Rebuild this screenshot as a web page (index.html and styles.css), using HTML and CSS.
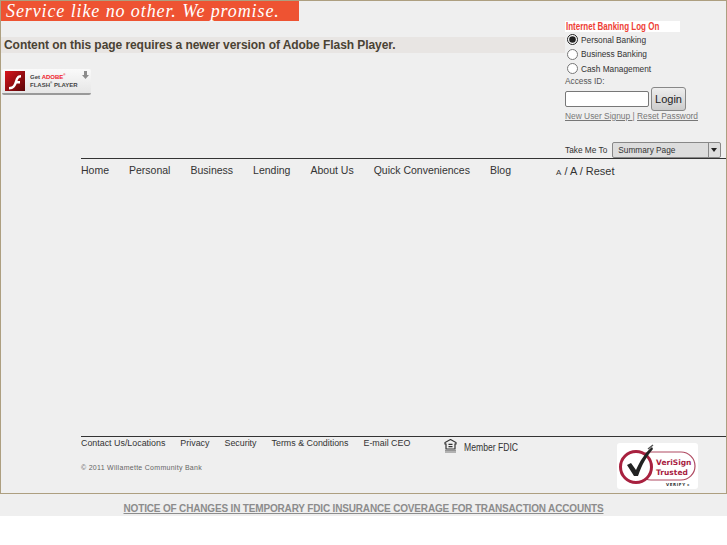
FILE: index.html
```html
<!DOCTYPE html>
<html lang="en">
<head>
<meta charset="utf-8">
<title>Willamette Community Bank</title>
<link rel="stylesheet" href="styles.css">
</head>
<body>
<div class="shell">
  <header class="top">
    <div class="top-left">
      <div class="banner">Service like no other. We promise.</div>
      <div class="flash-note">Content on this page requires a newer version of Adobe Flash Player.</div>
      <a class="flash-badge" href="#">
        <span class="flash-icon"><svg width="20" height="20" viewBox="0 0 20 20"><defs><linearGradient id="fg" x1="0" y1="0" x2="1" y2="1"><stop offset="0" stop-color="#d8141c"/><stop offset="1" stop-color="#5a0508"/></linearGradient></defs><rect width="20" height="20" fill="url(#fg)"/><path d="M4 16c4 0 5-3 6-6s2-6 6-6v2.500c-2.500 0-3 2-3.500 3.500H15v2.500h-3.300C10.700 15 9 18.500 4 18.500z" fill="#fff"/></svg></span>
        <span class="flash-text"><span>Get <b class="adobe">ADOBE<sup>®</sup></b></span><span>FLASH<sup>®</sup> PLAYER</span></span>
        <svg class="flash-dl" width="7" height="9" viewBox="0 0 7 9"><path d="M2 0h3v4h2L3.500 8 0 4h2z" fill="#8c8c8c"/></svg>
      </a>
    </div>
    <form class="login">
      <div class="login-title"><span class="squeeze">Internet Banking Log On</span></div>
      <label class="radio-row"><input type="radio" name="bank" checked> Personal Banking</label>
      <label class="radio-row"><input type="radio" name="bank"> Business Banking</label>
      <label class="radio-row"><input type="radio" name="bank"> Cash Management</label>
      <div class="access-label">Access ID:</div>
      <div class="access-row"><input class="access-input" type="text"><button class="login-btn" type="button">Login</button></div>
      <div class="login-links"><a href="#">New User Signup </a> | <a href="#">Reset Password</a></div>
      <div class="take-row"><span>Take Me To</span><div class="select"><span class="select-value">Summary Page</span><span class="select-arrow"></span></div></div>
    </form>
  </header>

  <nav class="nav">
    <div class="nav-links">
      <a href="#">Home</a><a href="#">Personal</a><a href="#">Business</a><a href="#">Lending</a><a href="#">About Us</a><a href="#">Quick Conveniences</a><a href="#">Blog</a>
    </div>
    <div class="text-size"><span class="small-a">A</span> / <span class="big-a">A</span> / Reset</div>
  </nav>

  <footer class="foot">
    <div class="foot-left">
      <div class="foot-links"><a href="#">Contact Us/Locations</a><a href="#">Privacy</a><a href="#">Security</a><a href="#">Terms &amp; Conditions</a><a href="#">E-mail CEO</a></div>
      <div class="copyright">© 2011 Willamette Community Bank</div>
    </div>
    <div class="fdic">
      <svg width="13" height="14" viewBox="0 0 13 14"><path d="M6.500 .5 1 3.500V5h1v5h9V5h1V3.500z" fill="none" stroke="#333" stroke-width="1.200"/><path d="M4.500 4.800h4v1.200h-4zM4.500 7h4v1.200h-4z" fill="#333"/><path d="M1 11h11v.8H1zM1 12.600h11v.8H1z" fill="#777"/></svg>
      <span class="fdic-text">Member FDIC</span>
    </div>
    <div class="verisign">
      <svg width="81" height="46" viewBox="0 0 81 46">
        <rect width="81" height="46" rx="3" fill="#fff"/>
        <rect x="20" y="9" width="58" height="28" rx="14" fill="none" stroke="#b04a62" stroke-width="1.200"/>
        <circle cx="19" cy="24" r="15.500" fill="#fff" stroke="#a8213f" stroke-width="3"/>
        <path d="M10 22l4-2 5 7C23 18 28 10 35 4l1 2c-6 7-11 15-15 27h-4z" fill="#222"/>
        <path d="M31 6l5-4" stroke="#555" stroke-width="1.500"/>
        <text class="vs-name" x="39" y="22">VeriSign</text>
        <text class="vs-name" x="39" y="32">Trusted</text>
        <text class="vs-verify" x="49" y="43">VERIFY ▸</text>
      </svg>
    </div>
  </footer>
</div>
<div class="notice"><a href="#">NOTICE OF CHANGES IN TEMPORARY FDIC INSURANCE COVERAGE FOR TRANSACTION ACCOUNTS</a></div>
</body>
</html>
```

FILE: styles.css
```css
* { box-sizing: border-box; }
html, body { margin: 0; padding: 0; background: #fff; }
body { font-family: "Liberation Sans", Arial, sans-serif; color: #333; }
a { color: inherit; text-decoration: none; }

.shell {
  height: 494px;
  background: #efefef;
  border: 1px solid #ad9f80;
  display: flex;
  flex-direction: column;
}

.top { display: flex; height: 157px; }
.top-left { width: 564px; flex: none; }

.banner {
  width: 298px;
  height: 20px;
  background: #ee5332;
  color: #fff;
  font: italic 18px/20px "Liberation Serif", serif;
  letter-spacing: .9px;
  padding-left: 5px;
  white-space: nowrap;
}
.flash-note {
  margin-top: 16px;
  height: 16px;
  background: #e8e5e3;
  color: #4a4234;
  font-size: 12px;
  font-weight: bold;
  line-height: 16px;
  letter-spacing: -.06px;
  padding-left: 3px;
  white-space: nowrap;
}
.flash-badge {
  position: relative;
  display: flex;
  align-items: center;
  width: 89px;
  height: 26px;
  margin: 16px 0 0 1px;
  padding-left: 3px;
  background: linear-gradient(#fafafa, #e6e6e6);
  border-bottom: 2px solid #999;
  border-radius: 2px;
  color: #444;
}
.flash-icon { display: block; width: 20px; height: 20px; margin-right: 5px; }
.flash-text {
  display: flex;
  flex-direction: column;
  font-size: 6px;
  line-height: 8px;
  font-weight: bold;
}
.flash-text sup { font-size: 3px; line-height: 0; }
.adobe { color: #f0202c; }
.flash-dl { position: absolute; right: 2px; top: 2px; }

.login { width: 162px; flex: none; font-size: 8.300px; color: #333; }
.login-title {
  margin-top: 20px;
  width: 115px;
  height: 11px;
  background: #fff;
  color: #ee4035;
  font-size: 10px;
  font-weight: bold;
  line-height: 11px;
  padding-left: 1px;
  white-space: nowrap;
}
.squeeze { display: inline-block; transform: scaleX(.8); transform-origin: left center; }
.radio-row {
  display: flex;
  align-items: center;
  gap: 3px;
  height: 14.500px;
  margin-left: 2px;
  padding-top: 1px;
  white-space: nowrap;
}
.radio-row input { margin: 0; width: 11px; height: 11px; accent-color: #222; }
.access-label { height: 10px; line-height: 10px; color: #555; }
.access-row { display: flex; align-items: center; gap: 2px; margin-top: 1px; }
.access-input {
  width: 84px;
  height: 16px;
  border: 1px solid #777;
  border-radius: 2px;
  background: #fff;
  padding: 0;
}
.login-btn {
  width: 35px;
  height: 24px;
  padding: 0;
  border: 1px solid #888;
  border-radius: 3px;
  background: linear-gradient(#eee, #ccc);
  font: 11px "Liberation Sans", sans-serif;
  color: #222;
}
.login-links { height: 12px; color: #777; font-size: 8.400px; white-space: nowrap; }
.login-links a { text-decoration: underline; }
.take-row { display: flex; align-items: center; gap: 5px; margin-top: 19px; height: 16px; white-space: nowrap; }
.select {
  display: flex;
  width: 109px;
  height: 16px;
  border: 1px solid #888;
  border-radius: 2px;
  background: #ddd;
}
.select-value { flex: 1; padding-left: 5px; line-height: 15px; }
.select-arrow { width: 12px; border-left: 1px solid #888; position: relative; }
.select-arrow::after {
  content: "";
  position: absolute;
  left: 2px;
  top: 5px;
  border: 3.500px solid transparent;
  border-top: 4px solid #222;
  border-bottom: 0;
}

.nav {
  display: flex;
  margin-left: 80px;
  height: 20px;
  border-top: 1px solid #333;
  font-size: 10.500px;
  color: #333;
}
.nav-links { display: flex; gap: 20px; width: 475px; padding-top: 5px; }
.text-size { padding-top: 6px; font-size: 11px; }
.small-a { font-size: 8px; }
.big-a { font-size: 11px; }

.foot {
  display: flex;
  margin-top: auto;
  margin-left: 80px;
  height: 57px;
  border-top: 1px solid #333;
}
.foot-left { width: 363px; flex: none; }
.foot-links { display: flex; gap: 15px; padding-top: 1px; font-size: 8.900px; line-height: 11px; color: #333; white-space: nowrap; }
.copyright { margin-top: 15px; font-size: 7px; color: #666; letter-spacing: .28px; white-space: nowrap; }
.fdic { display: flex; align-items: flex-start; width: 173px; flex: none; padding-top: 2px; gap: 7px; }
.fdic-text { font-size: 10.500px; line-height: 16px; color: #333; transform: scaleX(.82); transform-origin: left center; white-space: nowrap; }
.verisign { padding-top: 6px; }
.verisign svg { display: block; }
.vs-name { font: bold 7.500px "DejaVu Sans", sans-serif; fill: #a8213f; }
.vs-verify { font: bold 4px "DejaVu Sans", sans-serif; fill: #333; letter-spacing: .6px; }

.notice {
  height: 22px;
  background: #efefef;
  text-align: center;
  font-size: 10px;
  font-weight: bold;
  letter-spacing: -.165px;
  line-height: 30px;
  color: #8c8c8c;
}
.notice a { text-decoration: underline; }
```
